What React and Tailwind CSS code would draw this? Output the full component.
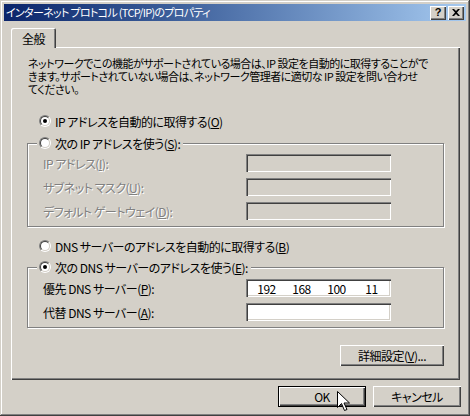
import React from 'react'

// Classic Windows 2000/XP dialog palette
const raised = 'shadow-[inset_1px_1px_#fff,inset_-1px_-1px_#404040,inset_-2px_-2px_#808080]'
const sunken = 'shadow-[inset_1px_1px_#808080,inset_2px_2px_#404040,inset_-1px_-1px_#fff,inset_-2px_-2px_#d4d0c8]'
const grayed = 'text-[#808080] [text-shadow:1px_1px_0_#fff]'

function Radio({ checked }) {
  return (
    <span className="w-[12px] h-[12px] rounded-full shrink-0 border border-t-[#808080] border-l-[#808080] border-b-white border-r-white flex">
      <span className="flex-1 rounded-full bg-white border border-t-[#404040] border-l-[#404040] border-b-[#d4d0c8] border-r-[#d4d0c8] flex items-center justify-center">
        {checked && <span className="w-[4px] h-[4px] rounded-full bg-black" />}
      </span>
    </span>
  )
}

function Field({ disabled, children }) {
  return (
    <div className={`h-[18px] w-[145px] flex items-center ${sunken} ${disabled ? 'bg-[#d4d0c8]' : 'bg-white'}`}>
      {children}
    </div>
  )
}

function Key({ children }) {
  return <u className="underline-offset-[1px]">{children}</u>
}

function Btn({ children, isDefault, className = '' }) {
  if (isDefault) {
    return (
      <div className={`border border-black ${className}`}>
        <div className={`w-full h-full flex items-center justify-center ${raised}`}>{children}</div>
      </div>
    )
  }
  return <div className={`flex items-center justify-center ${raised} ${className}`}>{children}</div>
}

function Group({ legend, checked, gap, children }) {
  return (
    <div className="border border-[#808080] shadow-[1px_1px_#fff,inset_1px_1px_#fff] flex flex-col pb-[6px]">
      <div className="-mt-[9px] ml-[9px] w-fit h-[16px] bg-[#d4d0c8] pl-[2px] pr-[3px] flex items-center gap-[4px]">
        <Radio checked={checked} />
        <span>{legend}</span>
      </div>
      <div className={`flex flex-col gap-[6px] pl-[15px] ${gap}`}>{children}</div>
    </div>
  )
}

function Row({ label, disabled, children }) {
  return (
    <div className="grid grid-cols-[203px_145px] items-center">
      <span className={disabled ? grayed : ''}>{label}</span>
      <Field disabled={disabled}>{children}</Field>
    </div>
  )
}

export default function App() {
  return (
    <div className={`relative w-[470px] h-[416px] overflow-hidden bg-[#d4d0c8] p-[4px] flex flex-col text-[12px] leading-[13px] text-black font-['Noto_Sans_CJK_JP',sans-serif] [font-feature-settings:'palt'] tracking-[-0.5px] shadow-[inset_-1px_-1px_#404040,inset_1px_1px_#d4d0c8,inset_-2px_-2px_#808080,inset_2px_2px_#fff]`}>
      {/* title bar */}
      <div className="h-[17px] shrink-0 bg-gradient-to-r from-[#0a246a] to-[#a6caf0] flex items-center justify-between pl-[2px] pr-[2px]">
        <span className="text-white text-[11px] tracking-[-0.7px]">インターネット プロトコル (TCP/IP)のプロパティ</span>
        <div className="flex gap-[2px]">
          <div className={`w-[16px] h-[14px] bg-[#d4d0c8] ${raised} flex items-center justify-center font-bold text-[11px] leading-none font-['Liberation_Sans',sans-serif] tracking-normal`}>?</div>
          <div className={`w-[16px] h-[14px] bg-[#d4d0c8] ${raised} flex items-center justify-center`}>
            <svg width="8" height="7" viewBox="0 0 8 7">
              <path d="M0 0h2l2 2 2-2h2L5 3.5 8 7H6L4 5 2 7H0l3-3.5z" fill="#000" />
            </svg>
          </div>
        </div>
      </div>

      <div className="flex flex-col pl-[7px] pr-[6px] pt-[7px]">
        {/* tab strip */}
        <div className="relative z-10 -mb-[1px] w-[45px] h-[20px] bg-[#d4d0c8] rounded-t-[2px] shadow-[inset_1px_1px_#fff,inset_-1px_0_#404040,inset_-2px_0_#808080] flex items-center justify-center">
          全般
        </div>

        {/* tab page */}
        <div className="w-[449px] h-[333px] shadow-[inset_1px_1px_#fff,inset_-1px_-1px_#404040,inset_-2px_-2px_#808080] pl-[16px] pr-[16px] pt-[10px] flex flex-col">
          <p className="pl-[1px] whitespace-nowrap text-[11px] leading-[13px]">
            ネットワークでこの機能がサポートされている場合は、IP 設定を自動的に取得することがで<br />
            きます。サポートされていない場合は、ネットワーク管理者に適切な IP 設定を問い合わせ<br />
            てください。
          </p>

          <div className="mt-[17px] h-[16px] pl-[12px] flex items-center gap-[4px]">
            <Radio checked />
            <span>IP アドレスを自動的に取得する(<Key>O</Key>)</span>
          </div>

          <div className="mt-[14px]">
            <Group legend={<>次の IP アドレスを使う(<Key>S</Key>):</>} gap="mt-[3px]">
              <Row disabled label={<>IP アドレス(<Key>I</Key>):</>} />
              <Row disabled label={<>サブネット マスク(<Key>U</Key>):</>} />
              <Row disabled label={<>デフォルト ゲートウェイ(<Key>D</Key>):</>} />
            </Group>
          </div>

          <div className="mt-[11px] h-[16px] pl-[12px] flex items-center gap-[4px]">
            <Radio />
            <span>DNS サーバーのアドレスを自動的に取得する(<Key>B</Key>)</span>
          </div>

          <div className="mt-[13px]">
            <Group checked legend={<>次の DNS サーバーのアドレスを使う(<Key>E</Key>):</>} gap="mt-[4px]">
              <Row label={<>優先 DNS サーバー(<Key>P</Key>):</>}>
                <div className="flex pl-[3px]">
                  {['192', '168', '100', '11'].map((n) => (
                    <span key={n} className="w-[35px] text-center">{n}</span>
                  ))}
                </div>
              </Row>
              <Row label={<>代替 DNS サーバー(<Key>A</Key>):</>} />
            </Group>
          </div>

          <Btn className="mt-[17px] self-end w-[104px] h-[21px]">
            詳細設定(<Key>V</Key>)...
          </Btn>
        </div>

        {/* dialog buttons */}
        <div className="mt-[6px] flex justify-end gap-[7px] -mr-[1px]">
          <Btn isDefault className="w-[88px] h-[21px]">OK</Btn>
          <Btn className="w-[88px] h-[21px]">キャンセル</Btn>
        </div>
      </div>

      {/* mouse pointer */}
      <svg className="absolute left-[337px] top-[391px]" width="13" height="21" viewBox="0 0 13 21">
        <path d="M0.5 0.5v16l4-4 3 7 2.5-1-3-6.5h5.5z" fill="#fff" stroke="#000" strokeWidth="1" />
      </svg>
    </div>
  )
}
